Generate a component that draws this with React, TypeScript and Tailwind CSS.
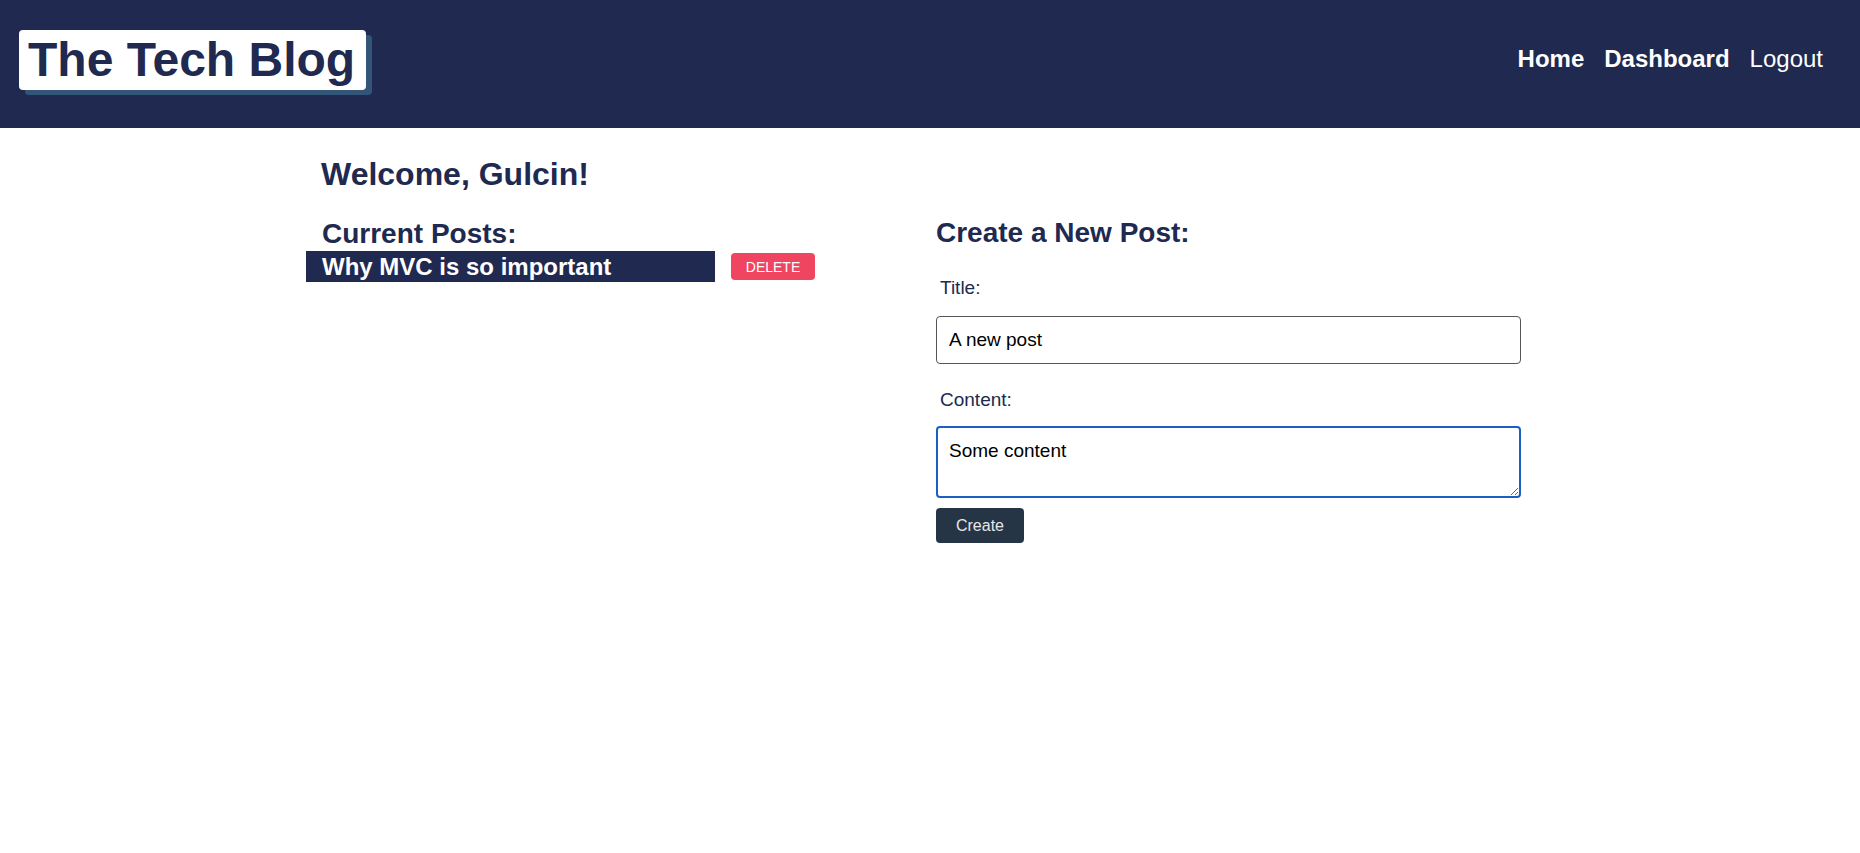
import React from "react";

const font = { fontFamily: '"Liberation Sans", Arial, Helvetica, sans-serif' };

function Header() {
  return (
    <header className="bg-[#20294f] h-[128px] flex items-start justify-between pl-[19px] pr-[37px]">
      {/* Logo */}
      <div className="mt-[30px] bg-white rounded-[4px] shadow-[6px_5px_0_0_#335577] h-[60px] w-[347px] flex items-center pl-[9px]">
        <h1 className="text-[#20294f] font-bold text-[48px] leading-none whitespace-nowrap">The Tech Blog</h1>
      </div>
      <nav className="mt-[47px] flex items-center gap-[20px] text-white text-[24px] leading-none">
        <a className="font-bold">Home</a>
        <a className="font-bold">Dashboard</a>
        <a>Logout</a>
      </nav>
    </header>
  );
}

function CurrentPosts() {
  return (
    <div className="w-[630px] shrink-0">
      <h2 className="text-[#20294f] font-bold text-[28px] leading-none pl-4 mt-[30px]">Current Posts:</h2>
      <div className="flex items-start mt-[3px]">
        <div className="bg-[#20294f] w-[409px] h-[31px] flex items-center pl-4">
          <span className="text-white font-bold text-[24px] leading-none">Why MVC is so important</span>
        </div>
        <button className="ml-[16px] mt-[2px] bg-[#ef4561] text-white text-[14px] rounded-[4px] w-[84px] h-[27px] leading-none">
          DELETE
        </button>
      </div>
    </div>
  );
}

function NewPostForm() {
  return (
    <div className="w-[585px] shrink-0 mt-[29px]">
      <h2 className="text-[#20294f] font-bold text-[28px] leading-none">Create a New Post:</h2>
      <label className="block text-[#20294f] text-[19px] leading-none pl-1 mt-[31px]">Title:</label>
      <input
        defaultValue="A new post"
        className="block w-full h-[48px] mt-[19px] border border-[#555] rounded-[4px] px-[12px] text-[19px] text-black outline-none"
      />
      <label className="block text-[#20294f] text-[19px] leading-none pl-1 mt-[26px]">Content:</label>
      <textarea
        defaultValue="Some content"
        className="block w-full h-[72px] mt-[17px] border-2 border-[#1a5fc4] rounded-[4px] px-[11px] pt-[9px] text-[19px] text-black outline-none"
      />
      <button className="block mt-[10px] bg-[#263545] text-[#e5e7eb] text-[16px] rounded-[4px] w-[88px] h-[35px]">
        Create
      </button>
    </div>
  );
}

export default function App() {
  return (
    <div className="min-h-screen bg-white" style={font}>
      <Header />
      <main className="w-[1250px] ml-[306px]">
        <h2 className="text-[#20294f] font-bold text-[32px] leading-none pl-[15px] mt-[30px]">Welcome, Gulcin!</h2>
        <div className="flex">
          <CurrentPosts />
          <NewPostForm />
        </div>
      </main>
    </div>
  );
}
